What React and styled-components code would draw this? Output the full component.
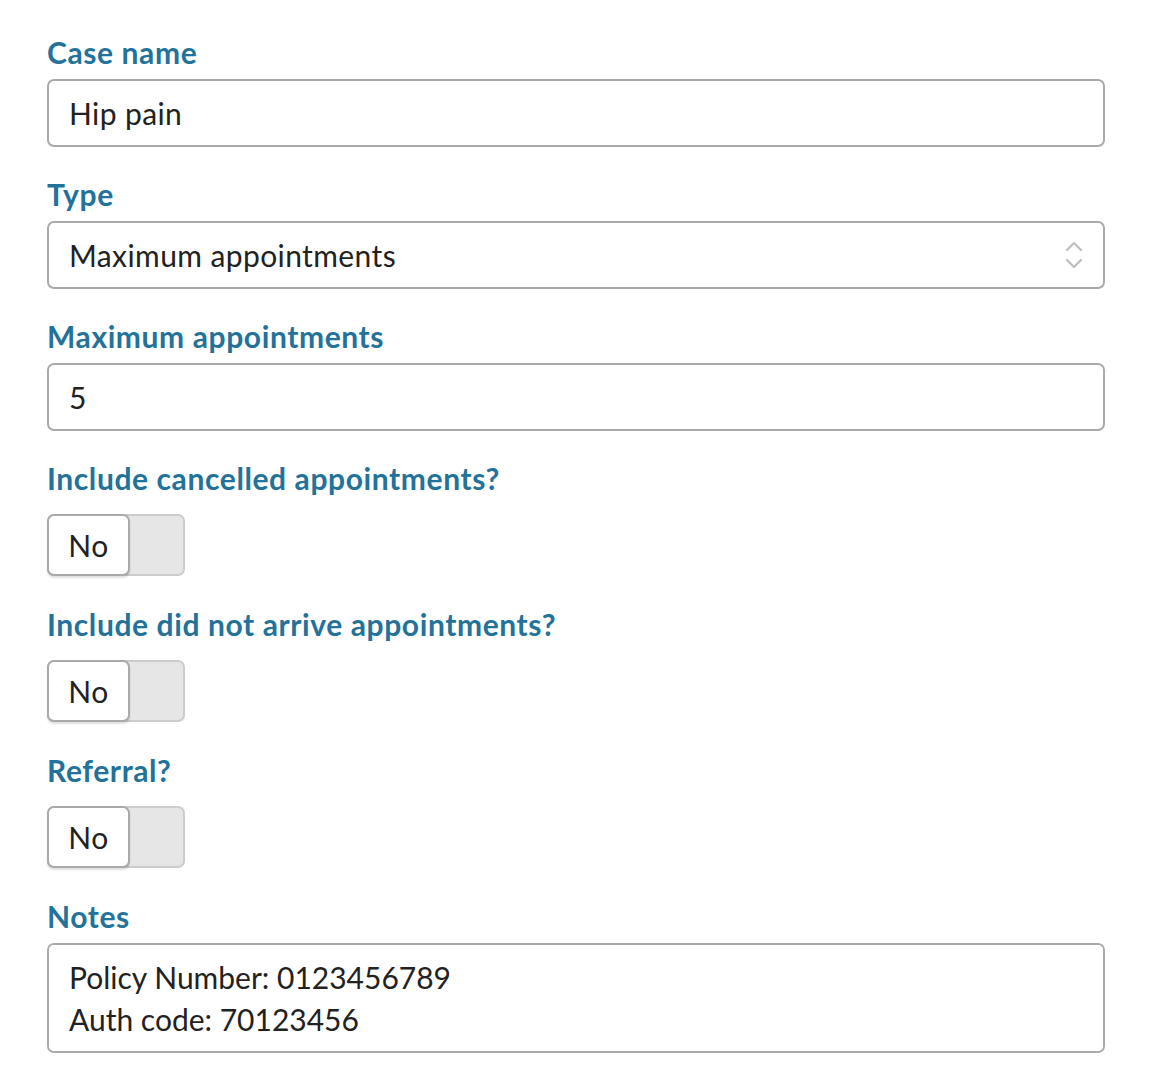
import React from "react";
import styled, { createGlobalStyle } from "styled-components";

const Global = createGlobalStyle`
  html, body { margin: 0; padding: 0; background: #fff; }
  body { font-family: "Lato", "Open Sans", sans-serif; color: #222; }
  * { box-sizing: border-box; }
`;

const Form = styled.form`
  display: flex;
  flex-direction: column;
  gap: 31px;
  padding: 36px 45px 0 47px;
  width: 1150px;
`;

const Field = styled.div`
  display: flex;
  flex-direction: column;
  gap: ${(p) => (p.$toggle ? "20px" : "11px")};
`;

const Label = styled.label`
  font-size: 30px;
  line-height: 32px;
  height: 32px;
  font-weight: 700;
  color: #23729a;
  letter-spacing: 0.6px;
  white-space: nowrap;
`;

const boxStyles = `
  width: 100%;
  border: 2px solid #aaaaaa;
  border-radius: 7px;
  background: #fff;
  font-family: "Lato", "Open Sans", sans-serif;
  font-size: 30px;
  letter-spacing: 0.4px;
  color: #222;
  padding: 0 20px;
  outline: none;
`;

const Input = styled.input`
  ${boxStyles}
  height: 68px;
`;

const SelectWrap = styled.div`
  position: relative;
  width: 100%;
`;

const Select = styled.select`
  ${boxStyles}
  height: 68px;
  appearance: none;
  -webkit-appearance: none;
`;

const Chevrons = styled.svg`
  position: absolute;
  right: 22px;
  top: 19px;
  pointer-events: none;
`;

const TextArea = styled.textarea`
  ${boxStyles}
  height: 110px;
  padding: 11px 20px 15px;
  line-height: 42px;
  letter-spacing: 0;
  resize: none;
`;

const Toggle = styled.div`
  position: relative;
  width: 138px;
  height: 62px;
  margin-bottom: 1px;
  border: 2px solid #cccccc;
  border-radius: 7px;
  background: #e6e6e6;
`;

const Knob = styled.div`
  position: absolute;
  left: -2px;
  top: -2px;
  width: 83px;
  height: 62px;
  border: 2px solid #aaaaaa;
  border-radius: 7px;
  background: #fff;
  box-shadow: 0 2px 2px rgba(0, 0, 0, 0.12);
  display: flex;
  align-items: center;
  justify-content: center;
  font-size: 30px;
  letter-spacing: 0.4px;
  color: #222;
`;

function YesNo() {
  return (
    <Toggle>
      <Knob>No</Knob>
    </Toggle>
  );
}

export default function App() {
  return (
    <>
      <Global />
      <Form>
        <Field>
          <Label>Case name</Label>
          <Input defaultValue="Hip pain" />
        </Field>
        <Field>
          <Label>Type</Label>
          <SelectWrap>
            <Select defaultValue="max">
              <option value="max">Maximum appointments</option>
            </Select>
            <Chevrons width="18" height="30" viewBox="0 0 18 30">
              <path d="M2 10 L9 3 L16 10" fill="none" stroke="#c0c0c0" strokeWidth="2.4" strokeLinecap="round" strokeLinejoin="round" />
              <path d="M2 20 L9 27 L16 20" fill="none" stroke="#c0c0c0" strokeWidth="2.4" strokeLinecap="round" strokeLinejoin="round" />
            </Chevrons>
          </SelectWrap>
        </Field>
        <Field>
          <Label>Maximum appointments</Label>
          <Input defaultValue="5" />
        </Field>
        <Field $toggle>
          <Label>Include cancelled appointments?</Label>
          <YesNo />
        </Field>
        <Field $toggle>
          <Label>Include did not arrive appointments?</Label>
          <YesNo />
        </Field>
        <Field $toggle>
          <Label>Referral?</Label>
          <YesNo />
        </Field>
        <Field>
          <Label>Notes</Label>
          <TextArea defaultValue={"Policy Number: 0123456789\nAuth code: 70123456"} />
        </Field>
      </Form>
    </>
  );
}
